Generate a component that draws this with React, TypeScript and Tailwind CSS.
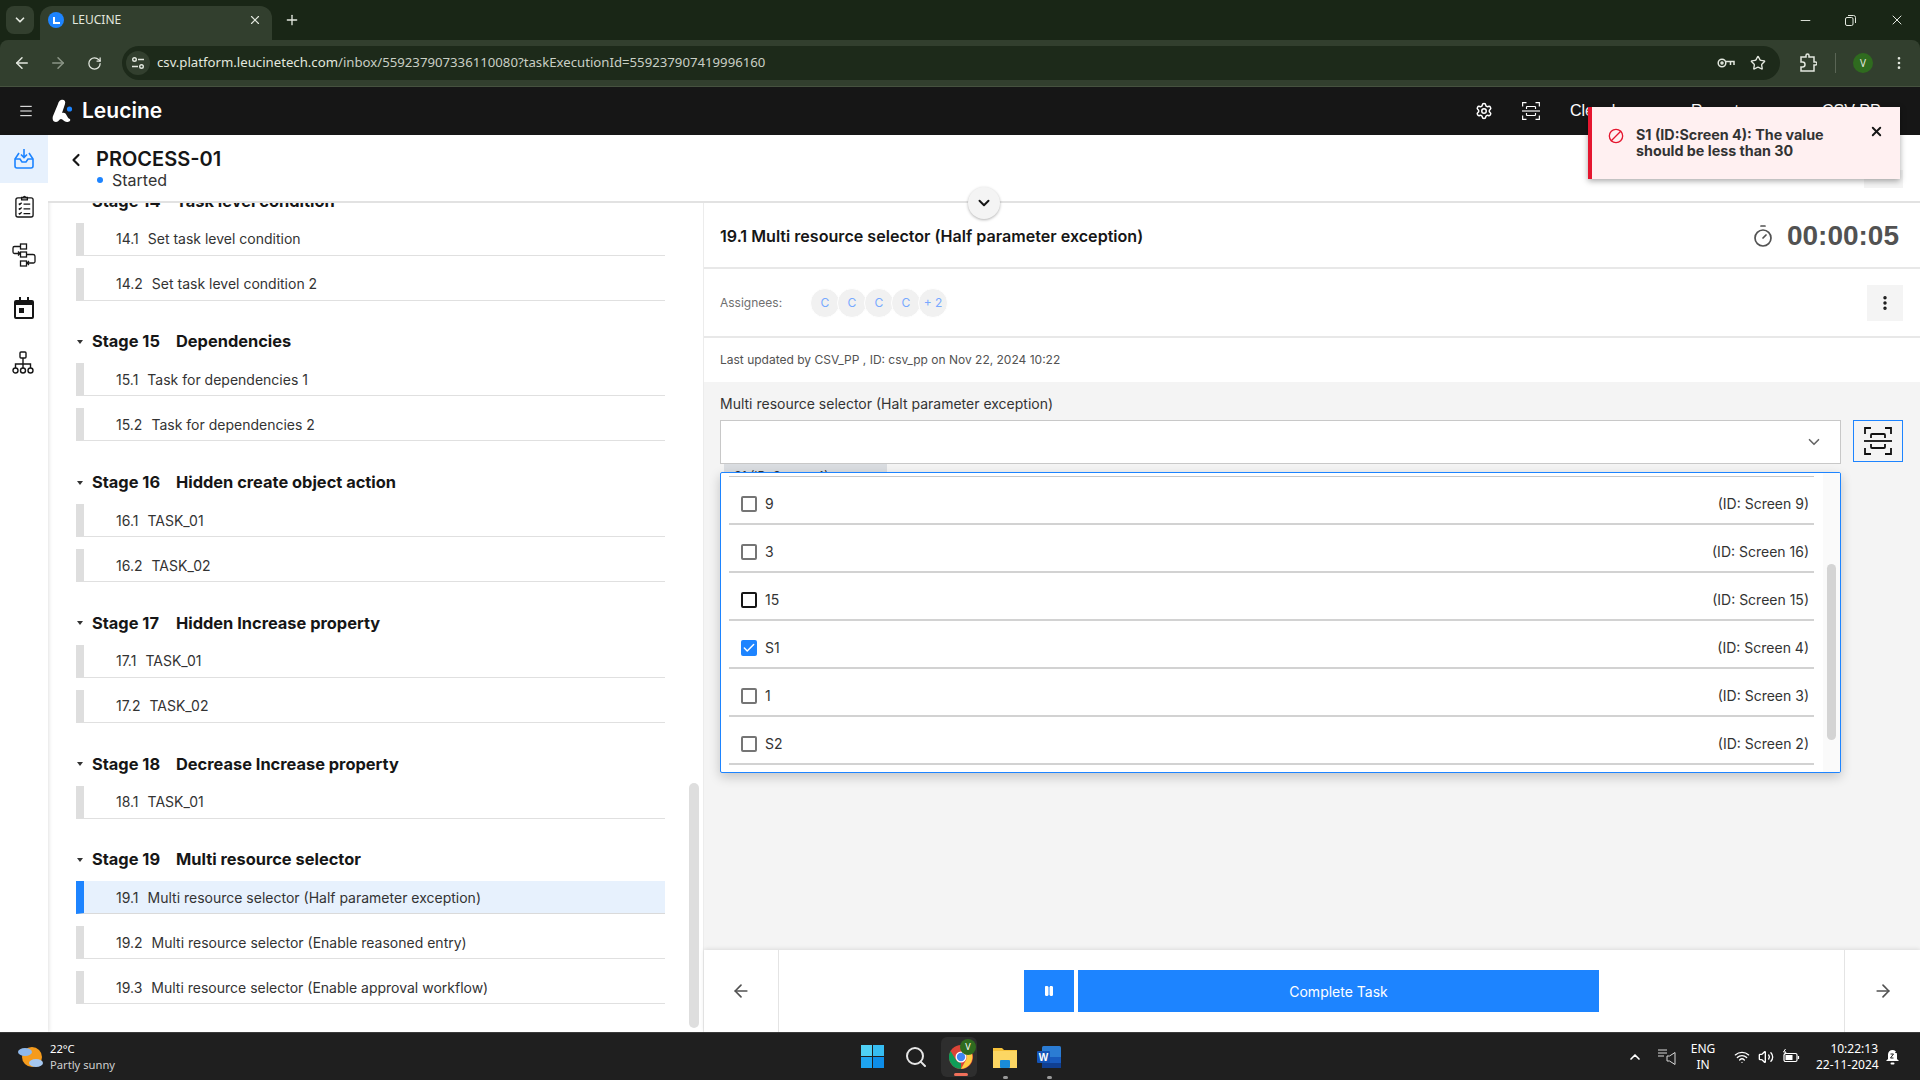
import {
  ArrowLeft,
  ArrowRight,
  Ban,
  Check,
  ChevronDown,
  ChevronLeft,
  ChevronUp,
  EllipsisVertical,
  Menu,
  Minus,
  Pause,
  Plus,
  RotateCw,
  Search,
  Settings,
  Star,
  Timer,
  Volume2,
  Wifi,
  X,
} from "lucide-react";

const stages = [
  { name: "Stage 14", title: "Task level condition", tasks: [["14.1", "Set task level condition"], ["14.2", "Set task level condition 2"]] },
  { name: "Stage 15", title: "Dependencies", tasks: [["15.1", "Task for dependencies 1"], ["15.2", "Task for dependencies 2"]] },
  { name: "Stage 16", title: "Hidden create object action", tasks: [["16.1", "TASK_01"], ["16.2", "TASK_02"]] },
  { name: "Stage 17", title: "Hidden Increase property", tasks: [["17.1", "TASK_01"], ["17.2", "TASK_02"]] },
  { name: "Stage 18", title: "Decrease Increase property", tasks: [["18.1", "TASK_01"]] },
  {
    name: "Stage 19",
    title: "Multi resource selector",
    tasks: [
      ["19.1", "Multi resource selector (Half parameter exception)"],
      ["19.2", "Multi resource selector (Enable reasoned entry)"],
      ["19.3", "Multi resource selector (Enable approval workflow)"],
    ],
  },
];

const options = [
  { label: "9", id: "(ID: Screen 9)" },
  { label: "3", id: "(ID: Screen 16)" },
  { label: "15", id: "(ID: Screen 15)", dark: true },
  { label: "S1", id: "(ID: Screen 4)", checked: true },
  { label: "1", id: "(ID: Screen 3)" },
  { label: "S2", id: "(ID: Screen 2)" },
];

function ScanIcon({ size, color }: { size: number; color: string }) {
  return (
    <svg width={size} height={size} viewBox="0 0 28 28" fill="none" stroke={color} strokeWidth="1.8">
      <path d="M1 7V1h6M21 1h6v6M1 21v6h6M21 27h6v-6" />
      <path d="M0 14h28" />
      <path d="M7 11V8a1 1 0 0 1 1-1h12a1 1 0 0 1 1 1v3M7 17v3a1 1 0 0 0 1 1h12a1 1 0 0 0 1-1v-3" />
    </svg>
  );
}

function BrowserBar() {
  return (
    <div className="bg-[#192616] text-[#e3e8df] font-['Noto_Sans',sans-serif]">
      <div className="h-[40px] flex items-end pl-[6px]">
        <div className="w-[28px] h-[28px] mb-[6px] rounded-lg bg-[#323f2e] flex items-center justify-center">
          <ChevronDown size={14} strokeWidth={3} />
        </div>
        <div className="ml-[6px] w-[232px] h-[34px] bg-[#323f2e] rounded-t-xl flex items-center pl-[8px] pr-[10px] pb-[6px]">
          <div className="w-[16px] h-[16px] rounded-full bg-[#1d84ff] flex items-center justify-center">
            <div className="w-[7px] h-[7px] border-l-2 border-b-2 border-white" />
          </div>
          <span className="ml-[8px] text-[12px] flex-1">LEUCINE</span>
          <X size={14} />
        </div>
        <Plus size={16} className="ml-[12px] mb-[12px]" />
        <div className="ml-auto h-[40px] flex items-center">
          <Minus size={15} className="mr-[32px]" strokeWidth={1.5} />
          <svg width="11" height="11" viewBox="0 0 11 11" fill="none" stroke="currentColor" className="mr-[33px]">
            <rect x="0.5" y="2.5" width="7.5" height="8" rx="1.5" />
            <path d="M3 .5h5.5a2 2 0 0 1 2 2V8" />
          </svg>
          <X size={16} className="mr-[15px]" strokeWidth={1.5} />
        </div>
      </div>
      <div className="h-[47px] bg-[#323f2e] rounded-t-lg flex items-center pl-[13px] border-b border-[#46523f]">
        <ArrowLeft size={18} />
        <ArrowRight size={18} className="ml-[18px] text-[#8b9586]" />
        <RotateCw size={15} className="ml-[20px]" />
        <div className="ml-[20px] w-[1658px] h-[34px] bg-[#1d2a1a] rounded-full flex items-center pl-[4px] pr-[14px]">
          <div className="w-[24px] h-[24px] rounded-full bg-[#323f2e] flex items-center justify-center">
            <svg width="14" height="14" viewBox="0 0 14 14" fill="none" stroke="currentColor" strokeWidth="1.4">
              <circle cx="3.5" cy="3.5" r="1.8" />
              <path d="M7 3.5h6M1 10.5h6" />
              <circle cx="10.5" cy="10.5" r="1.8" />
            </svg>
          </div>
          <span className="ml-[7px] text-[13.2px] whitespace-nowrap flex-1">
            <span>csv.platform.leucinetech.com</span>
            <span className="text-[#c9cfc5]">/inbox/559237907336110080?taskExecutionId=559237907419996160</span>
          </span>
          <svg width="18" height="12" viewBox="0 0 18 12" fill="none" stroke="currentColor" strokeWidth="1.5" className="mr-[15px]">
            <circle cx="5" cy="6" r="3.8" />
            <circle cx="5" cy="6" r="1" />
            <path d="M9 4.5h8v3.5M13.5 4.5v3.5" />
          </svg>
          <Star size={16} />
        </div>
        <svg width="18" height="20" viewBox="0 0 18 20" fill="none" stroke="currentColor" strokeWidth="1.5" className="ml-[19px]">
          <path d="M2 4h5V2.5a1.5 1.5 0 0 1 3 0V4h5v5h1.5a1.5 1.5 0 0 1 0 3H15v6H2v-4h1.5a2 2 0 0 0 0-5H2z" />
        </svg>
        <div className="ml-[18px] w-px h-[20px] bg-[#5a6555]" />
        <div className="ml-[17px] w-[20px] h-[20px] rounded-full bg-[#2f6b1f] text-[10px] flex items-center justify-center">V</div>
        <EllipsisVertical size={16} className="ml-[18px]" />
      </div>
    </div>
  );
}

function AppHeader() {
  return (
    <div className="h-[48px] bg-[#161616] flex items-center pl-[18px] text-white font-['Liberation_Sans',sans-serif]">
      <Menu size={16} strokeWidth={1.5} />
      <svg width="24" height="24" viewBox="0 0 24 24" className="ml-[18px]">
        <path d="M9 1c3-1 5 1 4 4L10 14c2-1 4 0 5 3 1 2 2 3 3 3 1 2-1 3-3 3-3 0-4-3-6-3s-2 3-5 3c-3 0-4-3-3-6L6 5c.5-2 1.5-3.5 3-4z" fill="#fff" />
        <circle cx="17.5" cy="10" r="2.6" fill="#1d84ff" />
      </svg>
      <span className="ml-[6px] text-[21px] font-semibold font-['Inter',sans-serif]">Leucine</span>
      <div className="ml-auto flex items-center">
        <Settings size={18} />
        <div className="ml-[29px]"><ScanIcon size={18} color="#fff" /></div>
        <span className="ml-[30px] w-[121px] text-[16px]">Cleanl</span>
        <span className="w-[131px] text-[16px]">Report</span>
        <span className="w-[98px] text-[16px]">CSV PP</span>
      </div>
    </div>
  );
}

function Sidebar() {
  return (
    <div className="w-[48px] shrink-0 bg-white shadow-[1px_0_4px_rgba(0,0,0,0.12)] z-10 flex flex-col items-center text-[#161616]">
      <div className="w-full h-[48px] bg-[#e7f1fd] flex items-center justify-center">
        <svg width="22" height="22" viewBox="0 0 22 22" fill="none" stroke="#1d84ff" strokeWidth="1.6">
          <path d="M11 1v8M8 6.5 11 9.5l3-3" />
          <path d="M6 5 2 11v7a2 2 0 0 0 2 2h14a2 2 0 0 0 2-2v-7l-4-6" />
          <path d="M2 11h5l2 3h4l2-3h5" />
        </svg>
      </div>
      <svg width="21" height="23" viewBox="0 0 22 24" fill="none" stroke="currentColor" strokeWidth="1.4" className="mt-[12px]">
        <rect x="2" y="3" width="18" height="20" rx="2" />
        <path d="M8 5V2.5h2a1 1 0 0 1 2 0h2V5z" />
        <path d="M5 9l1 1 2-2M5 14l1 1 2-2M5 19l1 1 2-2M10 9.5h7M10 14.5h7M10 19.5h7" />
      </svg>
      <svg width="24" height="24" viewBox="0 0 24 24" fill="none" stroke="currentColor" strokeWidth="1.3" className="mt-[25px]">
        <rect x="8.5" y="1" width="6" height="5" />
        <rect x="8.5" y="9" width="6" height="5" />
        <rect x="8.5" y="18" width="6" height="5" />
        <path d="M8 3.5H2.5A1.5 1.5 0 0 0 1 5v4a1.5 1.5 0 0 0 1.5 1.5H8M6 8.5l2 2-2 2" />
        <path d="M15 11.5h6a2 2 0 0 1 2 2v5a1.5 1.5 0 0 1-1.5 1.5H15M17 18l-2 2 2 2" />
      </svg>
      <svg width="20" height="22" viewBox="0 0 20 22" className="mt-[30px]">
        <path d="M2 3h3V0h2v3h6V0h2v3h3a2 2 0 0 1 2 2v15a2 2 0 0 1-2 2H2a2 2 0 0 1-2-2V5a2 2 0 0 1 2-2zm0 5v12h16V8z" fill="#161616" />
        <rect x="5" y="11" width="5" height="5" fill="#161616" />
      </svg>
      <svg width="22" height="24" viewBox="0 0 22 24" fill="none" stroke="currentColor" strokeWidth="1.4" className="mt-[32px] -ml-[2px]">
        <rect x="8" y="1" width="6" height="6" rx="1" />
        <path d="M11 7v10M3.5 17v-4h15v4" />
        <circle cx="3.5" cy="19.5" r="2.5" />
        <circle cx="11" cy="19.5" r="2.5" />
        <circle cx="18.5" cy="19.5" r="2.5" />
      </svg>
    </div>
  );
}

function StageList() {
  return (
    <div className="w-[655px] shrink-0 overflow-hidden bg-white relative">
      <div className="-mt-[14px] pl-[28px] pr-[38px]">
        {stages.map((stage, s) => (
          <div key={stage.name} className={s > 0 ? "mt-[29.25px]" : ""}>
            <div className="h-[24px] mb-[9.5px] flex items-center text-[16.4px] font-bold text-[#161616] whitespace-pre">
              <div className="w-0 h-0 border-x-[3.5px] border-x-transparent border-t-[4px] border-t-[#333] mr-[9px] ml-px" />
              <span className="w-[84px]">{stage.name}</span>
              <span>{stage.title}</span>
            </div>
            <div className="flex flex-col gap-[12px]">
              {stage.tasks.map(([num, label]) => {
                const active = num === "19.1";
                return (
                  <div
                    key={num}
                    className={`h-[33px] border-l-[8px] border-b flex items-center pl-[32px] text-[14px] text-[#333] whitespace-pre ${
                      active ? "border-l-[#1d84ff] bg-[#e7f1fd] border-b-[#dadada]" : "border-l-[#dedede] border-b-[#e0e0e0]"
                    }`}
                  >
                    <span>{num}</span>
                    <span className="ml-[9px]">{label}</span>
                  </div>
                );
              })}
            </div>
          </div>
        ))}
      </div>
      <div className="absolute right-[4px] top-[580px] bottom-[4px] w-[10px] rounded-full bg-[#dedede]" />
    </div>
  );
}

function TaskPane() {
  return (
    <div className="flex-1 min-w-0 flex flex-col bg-[#f4f4f4] border-l border-[#ececec] relative">
      <div className="h-[66px] shrink-0 bg-white border-b-2 border-[#e8e8e8] flex items-center pl-[16px] pr-[21px] pt-[2px]">
        <span className="text-[16.1px] font-semibold text-[#161616]">19.1 Multi resource selector (Half parameter exception)</span>
        <Timer size={24} className="ml-auto text-[#525252]" strokeWidth={1.7} />
        <span className="ml-[12px] text-[28px] font-bold text-[#525252] font-['Liberation_Sans',sans-serif] leading-none">00:00:05</span>
      </div>
      <div className="h-[69px] shrink-0 bg-white border-b-2 border-[#e8e8e8] flex items-center pl-[16px] pr-[17px]">
        <span className="w-[90px] text-[12px] text-[#6f6f6f]">Assignees:</span>
        <div className="flex">
          {["C", "C", "C", "C", "+ 2"].map((a, i) => (
            <div
              key={i}
              className={`w-[30px] h-[30px] rounded-full bg-[#f1f1f1] border border-white text-[12px] text-[#78a9ff] flex items-center justify-center ${i > 0 ? "-ml-[3px]" : ""}`}
            >
              {a}
            </div>
          ))}
        </div>
        <div className="ml-auto w-[36px] h-[36px] bg-[#f4f4f4] flex items-center justify-center text-[#161616]">
          <EllipsisVertical size={18} strokeWidth={2.6} />
        </div>
      </div>
      <div className="h-[44px] shrink-0 bg-white flex items-center pl-[16px] text-[12px] text-[#525252]">
        Last updated by CSV_PP , ID: csv_pp on Nov 22, 2024 10:22
      </div>
      <div className="flex-1 pl-[16px] pr-[16px] pt-[13px]">
        <div className="text-[14px] text-[#333] leading-[18px]">Multi resource selector (Halt parameter exception)</div>
        <div className="mt-[7px] flex items-start">
          <div className="w-[1121px] shrink-0">
            <div className="h-[44px] bg-white border border-[#c8c8c8] flex items-center justify-end pr-[17px] text-[#666]">
              <ChevronDown size={18} strokeWidth={2.2} />
            </div>
            <div className="ml-[4px] w-[163px] h-[8px] bg-[#dadde1] overflow-hidden pl-[10px] text-[12px] text-[#333] leading-[24px]">
              S1 (ID: Screen 4)
            </div>
          </div>
          <div className="ml-[12px] w-[50px] h-[42px] border border-[#1d84ff] bg-[#f4f4f4] flex items-center justify-center">
            <ScanIcon size={28} color="#111" />
          </div>
        </div>
      </div>
      <div className="absolute left-[16px] top-[269px] w-[1121px] h-[301px] bg-white border border-[#1d84ff] rounded-[2px] shadow-[0_4px_12px_rgba(0,0,0,0.2)] overflow-hidden flex">
        <div className="w-[1102px] shrink-0 pt-[3px] pl-[8px] pr-[9px] text-[14px] text-[#333]">
          <div className="border-b border-[#c8c8c8] w-full" />
          {options.map((o) => (
            <div key={o.label} className="h-[48px] border-b-2 border-[#d2d2d2] pt-[19px] pl-[12px] pr-[5px] flex items-start justify-between">
              <div className="flex items-center">
                <div
                  className={`w-[16px] h-[16px] rounded-[2px] flex items-center justify-center ${
                    o.checked ? "bg-[#1d84ff]" : o.dark ? "border-2 border-[#161616]" : "border-2 border-[#757575]"
                  }`}
                >
                  {o.checked && <Check size={14} color="#fff" strokeWidth={2.5} />}
                </div>
                <span className="ml-[8px] leading-[16px]">{o.label}</span>
              </div>
              <span className="leading-[16px]">{o.id}</span>
            </div>
          ))}
        </div>
        <div className="flex-1 bg-[#fafafa] flex justify-center">
          <div className="w-[9px] h-[176px] mt-[91px] rounded-full bg-[#d4d4d4]" />
        </div>
      </div>
      <div className="h-[82px] shrink-0 bg-white shadow-[0_-1px_4px_rgba(0,0,0,0.1)] flex items-center">
        <div className="w-[75px] h-full border-r border-[#e4e4e4] flex items-center justify-center text-[#525252]">
          <ArrowLeft size={20} />
        </div>
        <div className="flex-1 flex justify-center gap-[4px]">
          <div className="w-[50px] h-[42px] bg-[#1d84ff] flex items-center justify-center text-white">
            <Pause size={12} fill="#fff" />
          </div>
          <div className="w-[521px] h-[42px] bg-[#1d84ff] flex items-center justify-center text-white text-[14px]">Complete Task</div>
        </div>
        <div className="w-[76px] h-full border-l border-[#e4e4e4] flex items-center justify-center text-[#525252]">
          <ArrowRight size={20} />
        </div>
      </div>
    </div>
  );
}

function Taskbar() {
  return (
    <div className="h-[48px] shrink-0 bg-[#1f1f1f] border-t border-[#3a3a3a] flex items-center relative text-white font-['Noto_Sans',sans-serif] text-[12px] leading-[16px]">
      <div className="ml-[17px] flex items-center">
        <svg width="26" height="24" viewBox="0 0 26 24">
          <circle cx="15" cy="12" r="10" fill="#f59b1c" />
          <ellipse cx="8" cy="7" rx="7" ry="4" fill="#8fb8ea" />
          <ellipse cx="19" cy="18" rx="7" ry="4" fill="#a6c8f0" />
        </svg>
        <div className="ml-[7px] text-[11.2px]">
          <div>22°C</div>
          <div className="text-[#cfcfcf]">Partly sunny</div>
        </div>
      </div>

      <div className="absolute left-[861px] top-0 h-full flex items-center">
        <svg width="23" height="23" viewBox="0 0 23 23">
          <rect width="11" height="11" fill="#4fd0f5" />
          <rect x="12" width="11" height="11" fill="#36bdf2" />
          <rect y="12" width="11" height="11" fill="#1ea4f0" />
          <rect x="12" y="12" width="11" height="11" fill="#0d8de8" />
        </svg>
        <Search size={24} className="ml-[20px] text-[#e6e6e6]" strokeWidth={2} />
        <div className="ml-[13px] w-[36px] h-[40px] rounded-md bg-[#2e2e2e] flex items-center justify-center relative pl-[3px]">
          <svg width="24" height="24" viewBox="0 0 24 24">
            <circle cx="12" cy="12" r="12" fill="#db4437" />
            <path d="M12 24A12 12 0 0 1 1.6 6L7 15a6 6 0 0 0 5 3z" fill="#0f9d58" />
            <path d="M12 24l5-9a6 6 0 0 0 0-6h6a12 12 0 0 1-11 15z" fill="#ffcd40" />
            <circle cx="12" cy="12" r="5.5" fill="#fff" />
            <circle cx="12" cy="12" r="4.2" fill="#4285f4" />
          </svg>
          <div className="absolute right-[1px] top-[2px] w-[16px] h-[16px] rounded-full bg-[#2f6b1f] text-[9px] flex items-center justify-center">V</div>
          <div className="absolute bottom-[1px] w-[14px] h-[3px] rounded-full bg-[#f0705a]" />
        </div>
        <div className="ml-[16px] w-[24px] relative flex flex-col items-center">
          <svg width="24" height="22" viewBox="0 0 24 22">
            <path d="M0 2h9l2 2h13v18H0z" fill="#f6c13a" />
            <rect y="5" width="24" height="17" fill="#fcd663" />
            <rect x="7" y="14" width="10" height="8" rx="1" fill="#1a8cd8" />
          </svg>
          <div className="absolute -bottom-[11px] w-[5px] h-[3px] rounded-full bg-[#9a9a9a]" />
        </div>
        <div className="ml-[20px] w-[24px] relative flex flex-col items-center">
          <svg width="24" height="22" viewBox="0 0 24 22">
            <rect x="5" width="19" height="22" rx="1.5" fill="#2b7cd3" />
            <rect x="5" y="11" width="19" height="6" fill="#185abd" />
            <rect x="5" y="17" width="19" height="5" fill="#103f91" />
            <rect y="5" width="13" height="12" rx="1" fill="#1453b5" />
            <text x="6.5" y="15" fontSize="10" fontWeight="700" fill="#fff" textAnchor="middle" fontFamily="Liberation Sans">W</text>
          </svg>
          <div className="absolute -bottom-[11px] w-[5px] h-[3px] rounded-full bg-[#9a9a9a]" />
        </div>
      </div>

      <div className="ml-auto flex items-center pr-[20px]">
        <ChevronUp size={16} strokeWidth={2.5} />
        <svg width="18" height="18" viewBox="0 0 18 18" fill="none" stroke="#d8d8d8" className="ml-[15px]">
          <path d="M0 2h9M0 5h9M0 8h6M17 4.5v12L11.5 13H9V8h2.5z" />
        </svg>
        <div className="ml-[12px] w-[30px] text-center leading-[16px]">
          <div>ENG</div>
          <div>IN</div>
        </div>
        <Wifi size={16} className="ml-[16px]" />
        <Volume2 size={16} className="ml-[8px]" />
        <svg width="18" height="16" viewBox="0 0 18 16" fill="none" stroke="#fff" strokeWidth="1.2" className="ml-[8px]">
          <rect x="2" y="4.5" width="13" height="8" rx="1.5" />
          <path d="M16.5 7v3" />
          <rect x="3.5" y="6" width="7" height="5" fill="#fff" stroke="none" />
          <path d="M3.5 0 1.5 3H4L2.5 6" strokeWidth="1" />
        </svg>
        <div className="ml-[16px] w-[62px] text-right whitespace-nowrap leading-[16px]">
          <div>10:22:13</div>
          <div>22-11-2024</div>
        </div>
        <svg width="15" height="17" viewBox="0 0 15 17" className="ml-[7px]">
          <path d="M7.5 2A4.5 4.5 0 0 1 12 6.5V11l2 2H1l2-2V6.5A4.5 4.5 0 0 1 7.5 2z" fill="#fff" />
          <rect x="5.5" y="14.5" width="4" height="2" rx="1" fill="#fff" />
          <path d="M5.500 6h3l-3 4h3M10.500 1h3l-3 3.500h3" fill="none" stroke="#1f1f1f" strokeWidth="1" />
        </svg>
      </div>
    </div>
  );
}

export default function App() {
  return (
    <div className="w-[1920px] h-[1080px] overflow-hidden flex flex-col relative font-['Inter',sans-serif] bg-white">
      <BrowserBar />
      <AppHeader />
      <div className="flex-1 min-h-0 flex">
        <Sidebar />
        <div className="flex-1 min-w-0 flex flex-col">
          <div className="h-[68px] shrink-0 bg-white border-b-2 border-[#e2e2e2] z-10 flex pl-[18px] pt-[10px]">
            <ChevronLeft size={20} strokeWidth={2.6} className="mt-[5px] text-[#161616]" />
            <div className="ml-[10px]">
              <div className="text-[20px] font-semibold leading-[28px] text-[#161616]">PROCESS-01</div>
              <div className="-mt-[3px] flex items-center text-[16px] leading-[20px] text-[#333]">
                <div className="w-[6px] h-[6px] rounded-full bg-[#1d84ff] mr-[9px] ml-px" />
                Started
              </div>
            </div>
          </div>
          <div className="flex-1 min-h-0 flex">
            <StageList />
            <TaskPane />
          </div>
        </div>
      </div>
      <Taskbar />

      <div className="absolute left-[968px] top-[187px] w-[32px] h-[32px] rounded-full bg-[#f4f4f4] shadow-[0_1px_3px_rgba(0,0,0,0.3)] z-20 flex items-center justify-center text-[#161616]">
        <ChevronDown size={18} strokeWidth={2.6} />
      </div>

      <div className="absolute left-[1864px] top-[170px] w-[39px] h-[18px] bg-[#f4f4f4] z-20" />

      <div className="absolute left-[1588px] top-[107px] w-[312px] h-[72px] bg-[#fff0f1] border-l-[4px] border-[#e5162f] shadow-[0_2px_6px_rgba(0,0,0,0.35)] z-30 flex items-start pl-[16px] pt-[20px]">
        <Ban size={16} color="#e5162f" strokeWidth={2} className="mt-[1px] -scale-x-100" />
        <div className="ml-[12px] w-[205px] text-[14.3px] leading-[16px] font-bold text-[#333]">
          S1 (ID:Screen 4): The value should be less than 30
        </div>
        <X size={15} strokeWidth={3} className="absolute right-[16px] top-[17px] text-[#161616]" />
      </div>
    </div>
  );
}
